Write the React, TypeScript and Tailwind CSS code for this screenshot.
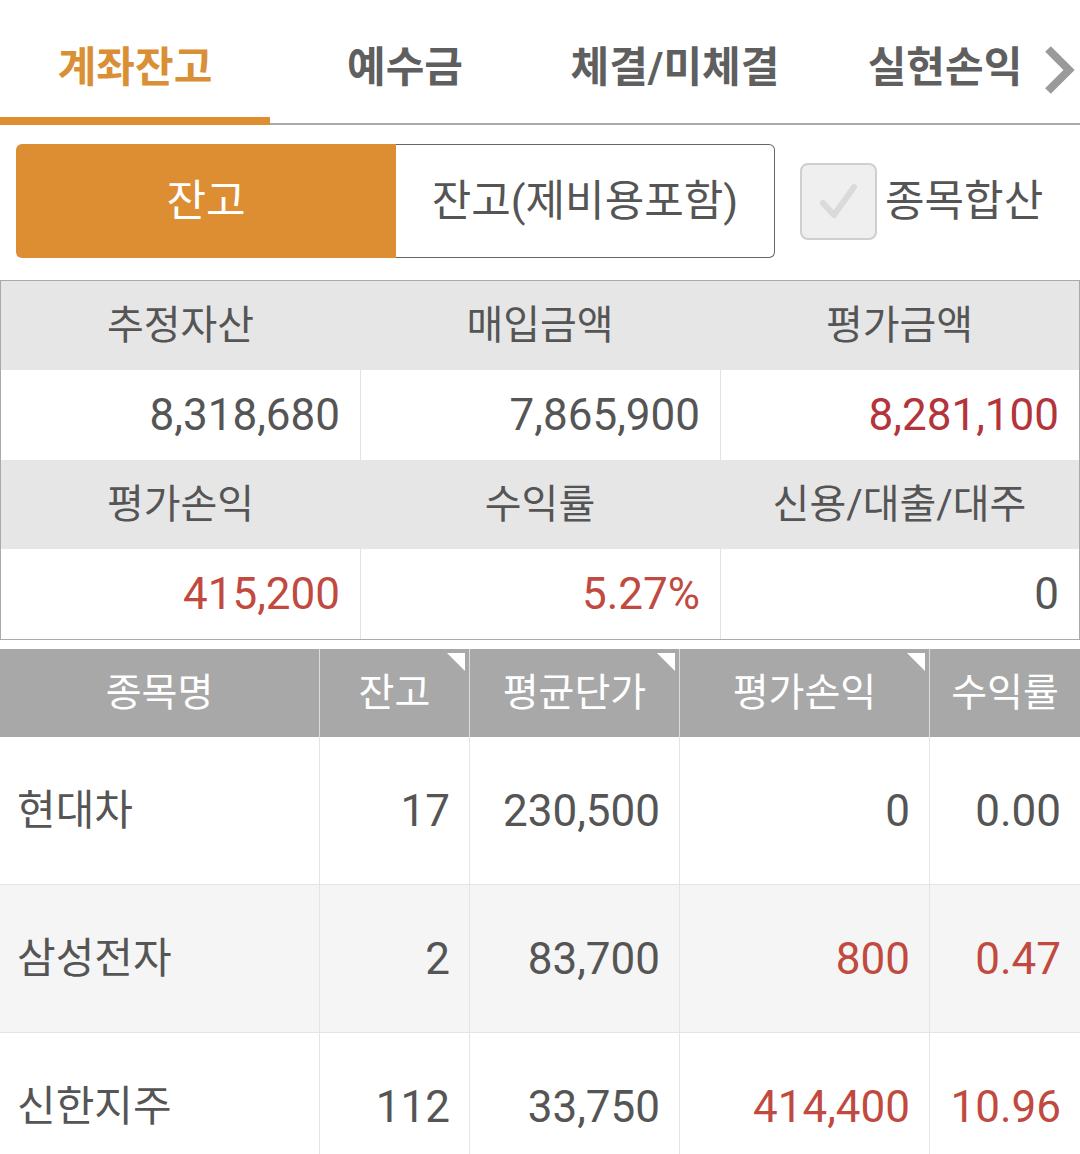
import React from "react";

const tabs = ["계좌잔고", "예수금", "체결/미체결", "실현손익"];

const summary = [
  [
    { label: "추정자산", value: "8,318,680", color: "text-[#555555]" },
    { label: "매입금액", value: "7,865,900", color: "text-[#555555]" },
    { label: "평가금액", value: "8,281,100", color: "text-[#b3343a]" },
  ],
  [
    { label: "평가손익", value: "415,200", color: "text-[#c04a40]" },
    { label: "수익률", value: "5.27%", color: "text-[#c04a40]" },
    { label: "신용/대출/대주", value: "0", color: "text-[#555555]" },
  ],
];

const holdings = [
  { name: "현대차", qty: "17", avg: "230,500", pl: "0", rate: "0.00", up: false },
  { name: "삼성전자", qty: "2", avg: "83,700", pl: "800", rate: "0.47", up: true },
  { name: "신한지주", qty: "112", avg: "33,750", pl: "414,400", rate: "10.96", up: true },
];

function Corner() {
  return (
    <span className="absolute top-[4px] right-[4px] w-0 h-0 border-t-[18px] border-t-white border-l-[18px] border-l-transparent" />
  );
}

export default function App() {
  return (
    <div className="w-[1080px] h-[1154px] overflow-hidden bg-white font-[Roboto,'Noto_Sans_CJK_KR',sans-serif]">
      {/* Tabs */}
      <div className="relative flex h-[125px] border-b-2 border-[#aaaaaa]">
        {tabs.map((t, i) => (
          <div
            key={t}
            className={`relative w-[270px] flex items-center justify-center pt-[12px] text-[42px] font-bold ${
              i === 0 ? "text-[#d98f35]" : "text-[#5f5f5f]"
            }`}
          >
            {t}
            {i === 0 && (
              <span className="absolute left-0 right-0 bottom-[-2px] h-[8px] bg-[#dd8e32]" />
            )}
          </div>
        ))}
        <svg
          className="absolute right-[4px] top-[44px]"
          width="34"
          height="52"
          viewBox="0 0 34 52"
        >
          <polyline
            points="6,5 27,26 6,47"
            fill="none"
            stroke="#9a9a9a"
            strokeWidth="8"
          />
        </svg>
      </div>

      {/* Segmented control + checkbox */}
      <div className="flex items-center px-[16px] mt-[19px]">
        <div className="flex w-[759px] h-[114px]">
          <div className="w-[380px] flex items-center justify-center rounded-l-[6px] bg-[#dd8e32] text-white text-[43px]">
            잔고
          </div>
          <div className="flex-1 flex items-center justify-center rounded-r-[6px] border border-l-0 border-[#666666] text-[#555555] text-[43px]">
            잔고(제비용포함)
          </div>
        </div>
        <div className="ml-[25px] w-[77px] h-[77px] rounded-[8px] border-2 border-[#cfcfcf] bg-[#efefef] flex items-center justify-center">
          <svg width="44" height="44" viewBox="0 0 44 44">
            <polyline
              points="6,24 17,36 37,8"
              fill="none"
              stroke="#dadada"
              strokeWidth="6"
              strokeLinecap="round"
              strokeLinejoin="round"
            />
          </svg>
        </div>
        <span className="ml-[8px] text-[43px] text-[#555555]">종목합산</span>
      </div>

      {/* Summary */}
      <div className="mt-[22px] border border-[#aaaaaa]">
        {summary.map((row, r) => (
          <div key={r}>
            <div className="grid grid-cols-[359px_360px_1fr] h-[89px] bg-[#e6e6e6]">
              {row.map((c) => (
                <div
                  key={c.label}
                  className="flex items-center justify-center text-[40px] text-[#555555]"
                >
                  {c.label}
                </div>
              ))}
            </div>
            <div className="grid grid-cols-[359px_360px_1fr] h-[90px] bg-white">
              {row.map((c, i) => (
                <div
                  key={c.label}
                  className={`flex items-center justify-end pr-[20px] text-[44px] ${c.color} ${
                    i > 0 ? "border-l border-[#e2e2e2]" : ""
                  }`}
                >
                  {c.value}
                </div>
              ))}
            </div>
          </div>
        ))}
      </div>

      {/* Holdings table */}
      <div className="mt-[9px]">
        <div className="grid grid-cols-[319px_150px_210px_250px_1fr] h-[88px] bg-[#a8a8a8] text-white text-[39px]">
          <div className="flex items-center justify-center">종목명</div>
          <div className="relative flex items-center justify-center border-l border-[#dcdcdc]">
            잔고
            <Corner />
          </div>
          <div className="relative flex items-center justify-center border-l border-[#dcdcdc]">
            평균단가
            <Corner />
          </div>
          <div className="relative flex items-center justify-center border-l border-[#dcdcdc]">
            평가손익
            <Corner />
          </div>
          <div className="flex items-center justify-center border-l border-[#dcdcdc]">
            수익률
          </div>
        </div>
        {holdings.map((h, i) => (
          <div
            key={h.name}
            className={`grid grid-cols-[319px_150px_210px_250px_1fr] h-[148px] border-b border-[#e4e4e4] text-[#555555] ${
              i === 1 ? "bg-[#f5f5f5]" : "bg-white"
            }`}
          >
            <div className="flex items-center pl-[17px] text-[42px]">{h.name}</div>
            <div className="flex items-center justify-end pr-[19px] text-[44px] border-l border-[#e4e4e4]">
              {h.qty}
            </div>
            <div className="flex items-center justify-end pr-[19px] text-[44px] border-l border-[#e4e4e4]">
              {h.avg}
            </div>
            <div
              className={`flex items-center justify-end pr-[19px] text-[44px] border-l border-[#e4e4e4] ${
                h.up ? "text-[#c04a40]" : ""
              }`}
            >
              {h.pl}
            </div>
            <div
              className={`flex items-center justify-end pr-[19px] text-[44px] border-l border-[#e4e4e4] ${
                h.up ? "text-[#c04a40]" : ""
              }`}
            >
              {h.rate}
            </div>
          </div>
        ))}
      </div>
    </div>
  );
}
